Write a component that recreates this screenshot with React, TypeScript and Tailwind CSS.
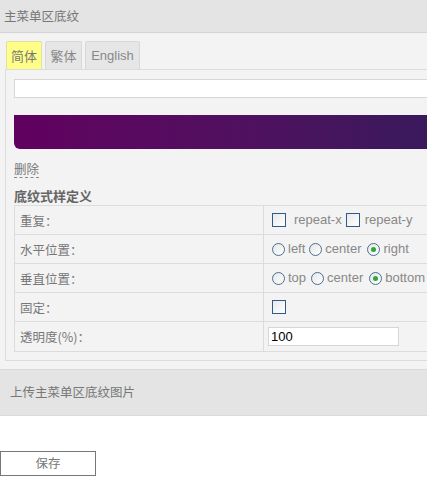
const cn = "font-['Noto_Sans_CJK_SC','Liberation_Sans',sans-serif]";
const lat = "font-['Liberation_Sans','Noto_Sans_CJK_SC',sans-serif]";

function Box({ className = "" }: { className?: string }) {
  return (
    <span className={`block h-[14px] w-[14px] shrink-0 border-[1.5px] border-[#2d5c8c] bg-gradient-to-br from-[#e9e9e9] to-white ${className}`} />
  );
}

function Radio({ on, className = "" }: { on?: boolean; className?: string }) {
  return (
    <span className={`flex h-[13px] w-[13px] shrink-0 items-center justify-center rounded-full border border-[#4b6e93] bg-gradient-to-br from-[#e6e6e6] to-white ${className}`}>
      {on && <span className="h-[5px] w-[5px] rounded-full bg-[#2fa83a]" />}
    </span>
  );
}

function Row({ label, children, last }: { label: string; children: React.ReactNode; last?: boolean }) {
  return (
    <div className={`flex h-[29px] ${last ? "" : "border-b border-[#dcdcdc]"}`}>
      <div className={`w-[249px] border-r border-[#dcdcdc] pl-[5px] leading-[29px] text-[12.5px] text-[#777] ${cn}`}>
        {label}
      </div>
      <div className={`flex items-center pl-[8px] text-[13px] text-[#888] ${lat}`}>{children}</div>
    </div>
  );
}

export default function App() {
  return (
    <div className="h-[479px] w-[427px] overflow-hidden bg-white">
      <div className="w-[470px]">
        <div className={`flex h-[33px] items-center border-b border-[#d4d4d4] bg-[#e4e4e4] pl-[4px] text-[12.5px] text-[#777] ${cn}`}>
          主菜单区底纹
        </div>
        <div className="bg-[#f3f3f3] pb-[8px] pt-[8px]">
          <div className="flex items-end gap-[3px] pl-[6px]">
            <div className={`flex h-[28px] w-[36px] items-center justify-center rounded-t-[2px] border border-b-0 border-[#e0e0a0] bg-[#ffff88] text-[13px] text-[#777] ${cn}`}>
              简体
            </div>
            <div className={`flex h-[28px] w-[37px] items-center justify-center rounded-t-[2px] border border-b-0 border-[#d8d8d8] bg-[#e6e6e6] text-[13px] text-[#888] ${cn}`}>
              繁体
            </div>
            <div className={`flex h-[28px] w-[55px] items-center justify-center rounded-t-[2px] border border-b-0 border-[#d8d8d8] bg-[#e6e6e6] text-[13px] text-[#888] ${lat}`}>
              English
            </div>
          </div>
          <div className="ml-[5px] border border-[#dcdcdc] pb-[8px] pl-[8px] pt-[9px]">
            <div className="h-[19px] border border-[#d6d6d6] bg-white" />
            <div className="mt-[17px] h-[34px] rounded-bl-[6px] bg-gradient-to-r from-[#61005f] via-[#501060] to-[#341a5a]" />
            <div className={`mt-[12px] flex flex-col text-[12.5px] text-[#777] ${cn}`}>
              <span className="w-fit border-b border-dashed border-[#888] leading-[16px]">删除</span>
            </div>
            <div className={`mt-[9px] text-[13px] font-bold leading-[18px] text-[#666] ${cn}`}>底纹式样定义</div>
            <div className="border border-[#dcdcdc]">
              <Row label="重复：">
                <Box />
                <span className="ml-[8px]">repeat-x</span>
                <Box className="ml-[4px]" />
                <span className="ml-[5px]">repeat-y</span>
              </Row>
              <Row label="水平位置：">
                <Radio />
                <span className="ml-[3px]">left</span>
                <Radio className="ml-[4px]" />
                <span className="ml-[3px]">center</span>
                <Radio className="ml-[6px]" on />
                <span className="ml-[3px]">right</span>
              </Row>
              <Row label="垂直位置：">
                <Radio />
                <span className="ml-[3px]">top</span>
                <Radio className="ml-[5px]" />
                <span className="ml-[3px]">center</span>
                <Radio className="ml-[6px]" on />
                <span className="ml-[3px]">bottom</span>
              </Row>
              <Row label="固定：">
                <Box />
              </Row>
              <Row label="透明度(%)：" last>
                <div className="-ml-[4px] flex h-[19px] w-[131px] items-center border border-[#d6d6d6] bg-white pl-[2px] text-[13px] text-black">
                  100
                </div>
              </Row>
            </div>
          </div>
        </div>
        <div className={`flex h-[47px] items-center border-b border-t border-[#dadada] bg-[#e4e4e4] pl-[10px] text-[12.5px] text-[#777] ${cn}`}>
          上传主菜单区底纹图片
        </div>
        <div className="pt-[35px]">
          <div className={`flex h-[25px] w-[96px] items-center justify-center border border-[#777] bg-white text-[12.5px] text-[#777] ${cn}`}>
            保存
          </div>
        </div>
      </div>
    </div>
  );
}
